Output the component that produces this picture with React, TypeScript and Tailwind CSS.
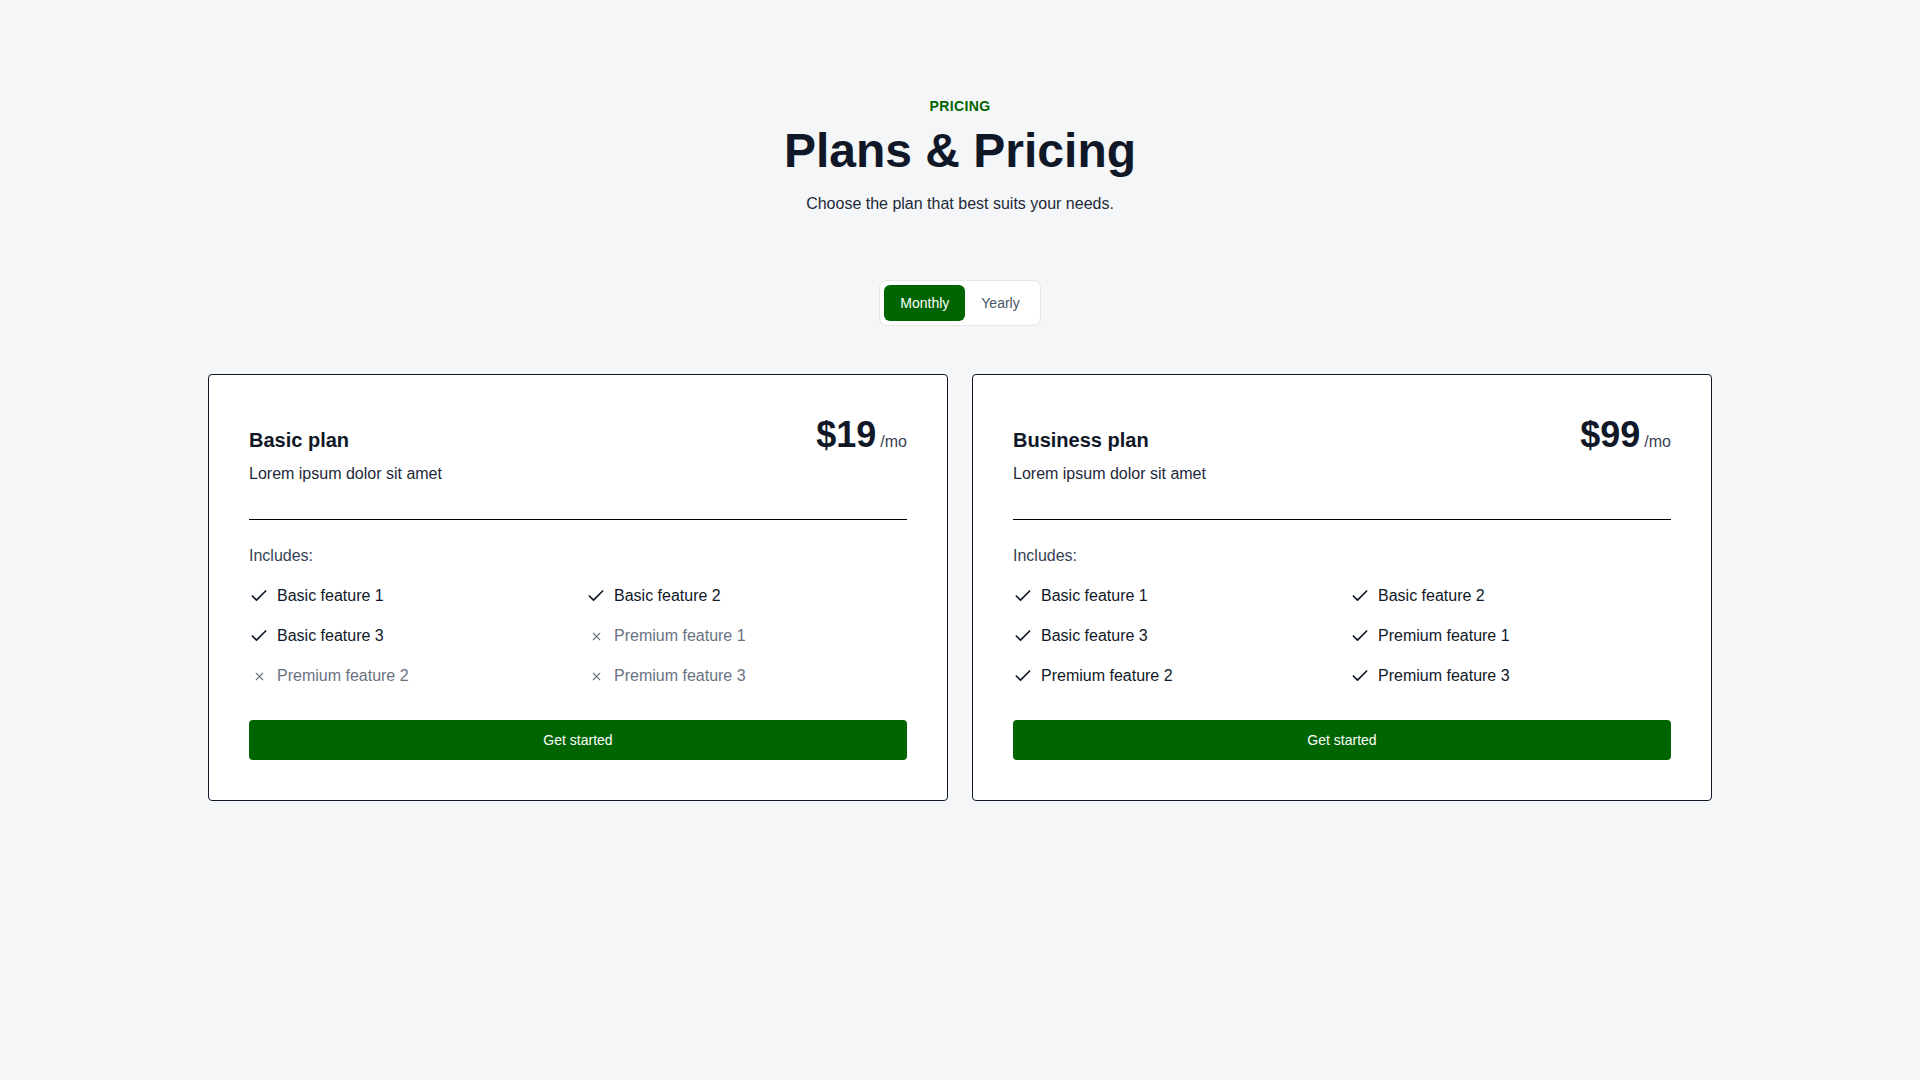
import React from "react";
import { Check, X } from "lucide-react";

interface Feature {
  label: string;
  included: boolean;
}

interface Plan {
  name: string;
  description: string;
  price: number;
  features: Feature[];
}

const plans: Plan[] = [
  {
    name: "Basic plan",
    description: "Lorem ipsum dolor sit amet",
    price: 19,
    features: [
      { label: "Basic feature 1", included: true },
      { label: "Basic feature 2", included: true },
      { label: "Basic feature 3", included: true },
      { label: "Premium feature 1", included: false },
      { label: "Premium feature 2", included: false },
      { label: "Premium feature 3", included: false },
    ],
  },
  {
    name: "Business plan",
    description: "Lorem ipsum dolor sit amet",
    price: 99,
    features: [
      { label: "Basic feature 1", included: true },
      { label: "Basic feature 2", included: true },
      { label: "Basic feature 3", included: true },
      { label: "Premium feature 1", included: true },
      { label: "Premium feature 2", included: true },
      { label: "Premium feature 3", included: true },
    ],
  },
];

const PlanCard = ({ plan }: { plan: Plan }) => {
  return (
    <div className="bg-white border border-gray-900 rounded px-10 pt-[42px] pb-10 flex flex-col">
      {/* Header */}
      <div className="flex items-baseline justify-between">
        <div>
          <h3 className="text-xl leading-7 font-bold text-gray-900">{plan.name}</h3>
          <p className="mt-2 text-base text-gray-800">{plan.description}</p>
        </div>
        <div className="flex items-baseline">
          <span className="text-4xl leading-none font-bold text-gray-900">
            ${plan.price}
          </span>
          <span className="ml-1 text-base text-gray-700">/mo</span>
        </div>
      </div>

      <div className="mt-[33px] border-t border-black" />

      {/* Features */}
      <p className="mt-6 text-base text-gray-700">Includes:</p>
      <ul className="mt-4 grid grid-cols-2 gap-x-4 gap-y-4">
        {plan.features.map((f) => (
          <li key={f.label} className="flex items-center gap-2">
            <span className="w-5 h-5 flex items-center justify-center shrink-0">
              {f.included ? (
                <Check className="w-5 h-5 text-gray-900" strokeWidth={2} />
              ) : (
                <X className="w-[13px] h-[13px] text-gray-500" strokeWidth={2} />
              )}
            </span>
            <span className={f.included ? "text-gray-900" : "text-gray-500"}>
              {f.label}
            </span>
          </li>
        ))}
      </ul>

      <button className="mt-8 h-10 w-full rounded bg-[#006400] text-white text-sm">
        Get started
      </button>
    </div>
  );
};

const App = () => {
  const [billing, setBilling] = React.useState<"monthly" | "yearly">("monthly");

  return (
    <div
      className="min-h-screen bg-[#f5f6f8] pt-24 pb-24"
      style={{ fontFamily: '"Liberation Sans", Arial, sans-serif' }}
    >
      {/* Heading */}
      <div className="flex flex-col items-center text-center">
        <span className="text-sm font-bold tracking-wide text-[#006400]">PRICING</span>
        <h1 className="mt-[11px] text-5xl leading-none font-bold text-gray-900">
          Plans &amp; Pricing
        </h1>
        <p className="mt-[17px] text-base text-gray-800">
          Choose the plan that best suits your needs.
        </p>
      </div>

      {/* Billing toggle */}
      <div className="mt-16 flex justify-center">
        <div className="flex bg-white border border-gray-200 rounded-lg p-1">
          <button
            onClick={() => setBilling("monthly")}
            className={
              billing === "monthly"
                ? "px-4 py-2 rounded-md text-sm bg-[#006400] text-white"
                : "px-4 py-2 rounded-md text-sm text-gray-600"
            }
          >
            Monthly
          </button>
          <button
            onClick={() => setBilling("yearly")}
            className={
              billing === "yearly"
                ? "px-4 py-2 rounded-md text-sm bg-[#006400] text-white"
                : "px-4 py-2 rounded-md text-sm text-gray-600"
            }
          >
            Yearly
          </button>
        </div>
      </div>

      {/* Plans */}
      <div className="mt-12 px-52 grid grid-cols-2 gap-6">
        {plans.map((p) => (
          <PlanCard key={p.name} plan={p} />
        ))}
      </div>
    </div>
  );
};

export default App;
